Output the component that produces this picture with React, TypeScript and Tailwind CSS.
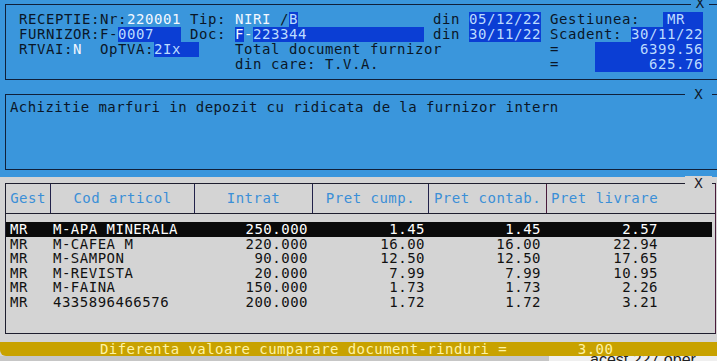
const mono = "font-['DejaVu_Sans_Mono',monospace] text-[14px]";

// fields shown on a dark blue background
function Hi({ children, className = '' }: { children: string; className?: string }) {
  return (
    <span className={`inline-block h-[15px] align-top bg-[#0b3ed4] text-[#bcdcff] ${className}`}>
      {children}
    </span>
  );
}

function W({ children }: { children: string }) {
  return <span className="text-[#f4f8ff]">{children}</span>;
}

function Close({ left, width }: { left: string; width: string }) {
  return (
    <span
      className={`absolute ${left} ${width} top-[-9px] h-[14px] leading-[14px] text-center bg-inherit text-[#0e1a2c]`}
    >
      X
    </span>
  );
}

const rows = [
  { gest: 'MR', cod: 'M-APA MINERALA', intrat: '250.000', cump: '1.45', contab: '1.45', livr: '2.57' },
  { gest: 'MR', cod: 'M-CAFEA M', intrat: '220.000', cump: '16.00', contab: '16.00', livr: '22.94' },
  { gest: 'MR', cod: 'M-SAMPON', intrat: '90.000', cump: '12.50', contab: '12.50', livr: '17.65' },
  { gest: 'MR', cod: 'M-REVISTA', intrat: '20.000', cump: '7.99', contab: '7.99', livr: '10.95' },
  { gest: 'MR', cod: 'M-FAINA', intrat: '150.000', cump: '1.73', contab: '1.73', livr: '2.26' },
  { gest: 'MR', cod: '4335896466576', intrat: '200.000', cump: '1.72', contab: '1.72', livr: '3.21' },
];

export default function App() {
  return (
    <div className={`w-[717px] h-[361px] overflow-hidden bg-[#d4d4d4] ${mono}`}>
      {/* header + description */}
      <div className="h-[177px] bg-[#3a96dc] pt-[4px] pl-[5px]">
        <div className="relative h-[76px] w-[712px] bg-[#3a96dc] border-t border-l border-b border-[#10203a]">
          <span className="absolute left-[685px] w-[18px] top-[-9px] h-[14px] leading-[14px] text-center bg-[#3a96dc] text-[#0e1a2c]">
            X
          </span>
          <div className="pt-[7px] pl-[13px] tracking-[0.57px] text-[#0a1628] whitespace-pre leading-[15px]">
            <div className="h-[15px]">
              {'RECEPTIE:Nr:'}
              <W>220001</W>
              {' Tip: '}
              <W>NIRI</W>
              {' /'}
              <Hi>B</Hi>
              {'               din '}
              <Hi>05/12/22</Hi>
              {' Gestiunea:   '}
              <Hi className="ml-[-4px] pl-[4px]">{'MR  '}</Hi>
            </div>
            <div className="h-[15px]">
              {'FURNIZOR:F-'}
              <Hi>{'0007   '}</Hi>
              {' Doc: '}
              <Hi className="text-[#f4f8ff]">F</Hi>
              <W>-</W>
              <Hi>{'223344             '}</Hi>
              {' din '}
              <Hi>30/11/22</Hi>
              {' Scadent: '}
              <Hi>30/11/22</Hi>
            </div>
            <div className="h-[15px]">
              {'RTVAI:'}
              <W>N</W>
              {'  OpTVA:'}
              <Hi>{'2Ix  '}</Hi>
              {'    Total document furnizor            =    '}
              <Hi>{'     6399.56'}</Hi>
            </div>
            <div className="h-[15px]">
              {'                        din care: T.V.A.                   =    '}
              <Hi>{'      625.76'}</Hi>
            </div>
          </div>
        </div>

        <div className="relative mt-[14px] h-[76px] w-[712px] bg-[#3a96dc] border-t border-l border-b border-[#10203a]">
          <span className="absolute left-[679px] w-[27px] top-[-8px] h-[14px] leading-[14px] text-center bg-[#3a96dc] text-[#0e1a2c]">
            X
          </span>
          <div className="pt-[5px] pl-[4px] leading-[15px] tracking-[0.42px] text-[#0a1628] whitespace-pre">
            Achizitie marfuri in depozit cu ridicata de la furnizor intern
          </div>
        </div>
      </div>

      {/* lines */}
      <div className="pt-[6px] pl-[5px]">
        <div className="relative h-[151px] w-[711px] border border-[#1e1e2e] border-r-[#4a1b3b]">
          <span className="absolute left-[679px] w-[27px] top-[-8px] h-[14px] leading-[14px] text-center bg-[#d4d4d4] text-[#1a1a2a]">
            X
          </span>
          <div className="flex h-[30px] border-b border-[#1e1e2e] text-[#3b8fd7] tracking-[0.5px]">
            <div className="w-[45px] flex items-center justify-center border-r border-[#22224a]">Gest</div>
            <div className="w-[144px] flex items-center justify-center border-r border-[#22224a]">Cod articol</div>
            <div className="w-[118px] flex items-center justify-center border-r border-[#22224a]">Intrat</div>
            <div className="w-[116px] flex items-center justify-center border-r border-[#22224a]">Pret cump.</div>
            <div className="w-[118px] flex items-center justify-center border-r border-[#4a1b3b]">Pret contab.</div>
            <div className="flex items-center pl-[4px]">Pret livrare</div>
          </div>
          <div className="pt-[8px] tracking-[0.5px] whitespace-pre">
            {rows.map((r, i) => (
              <div
                key={i}
                className={`flex w-[706px] h-[14.6px] leading-[14.6px] pl-[4px] ${
                  i === 0 ? 'bg-[#0a0a0a] text-white' : 'text-[#111111]'
                }`}
              >
                <span className="w-[43px]">{r.gest}</span>
                <span className="w-[147px]">{r.cod}</span>
                <span className="w-[108px] text-right">{r.intrat}</span>
                <span className="w-[117px] text-right">{r.cump}</span>
                <span className="w-[116px] text-right">{r.contab}</span>
                <span className="w-[117px] text-right">{r.livr}</span>
              </div>
            ))}
          </div>
        </div>
      </div>

      {/* difference bar */}
      <div className="mt-[8px] h-[14px] leading-[14px] bg-[#c8a200] text-[#fff3a3] rounded-bl-[6px] pl-[100px] tracking-[0.42px] whitespace-pre">
        {'Diferenta valoare cumparare document-rinduri =        3.00'}
      </div>
      <div className="flex h-[5px] overflow-hidden">
        <div className="w-[549px] bg-[#c6c6c6]" />
        <div className="flex-1 bg-[#efefef] pl-[41px] font-['Liberation_Sans',sans-serif] text-[16px] leading-none text-[#222222] -mt-[4px] whitespace-pre">
          acest 227 oper
        </div>
      </div>
    </div>
  );
}
